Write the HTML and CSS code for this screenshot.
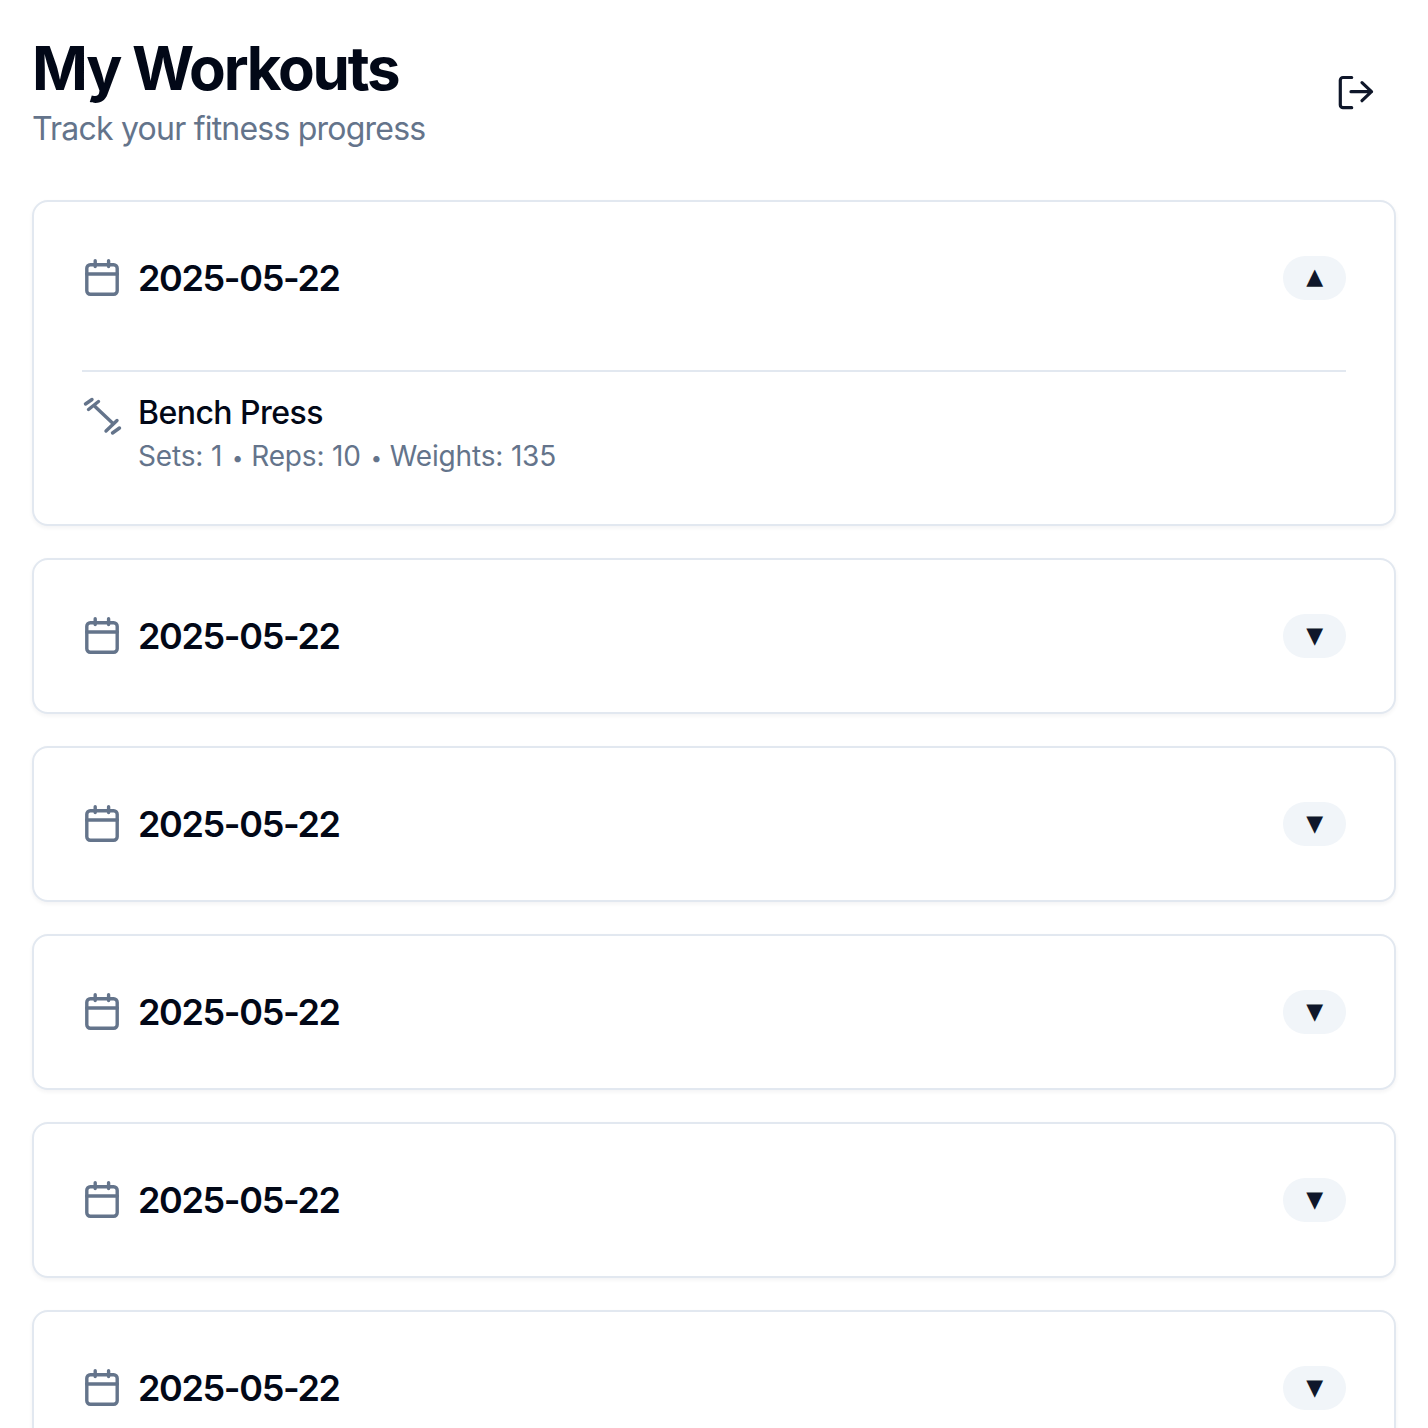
FILE: index.html
```html
<!DOCTYPE html>
<html lang="en">
<head>
<meta charset="utf-8">
<title>My Workouts</title>
<link rel="stylesheet" href="styles.css">
</head>
<body>
<svg class="sprites" width="0" height="0" aria-hidden="true">
  <symbol id="cal" viewBox="0 0 40 40">
    <rect x="4.8" y="6.8" width="30.4" height="29.4" rx="3.5"/>
    <path d="M4.8 16H35.2M13.2 2.8V8.5M26.6 2.8V8.5"/>
  </symbol>
</svg>
<main class="page">
  <header class="top">
    <div>
      <h1 class="title">My Workouts</h1>
      <p class="subtitle">Track your fitness progress</p>
    </div>
    <button class="logout" aria-label="Log out">
      <svg class="logout-icon" viewBox="0 0 48 48"><path d="M19.7 9.5H11A2.7 2.7 0 0 0 8.3 12.2V37A2.7 2.7 0 0 0 11 39.7H19.7M19 23.7H39.5M30 14.7L39.5 23.7L30 32.7"/></svg>
    </button>
  </header>
  <section class="list">
    <article class="card">
      <div class="row">
        <div class="date-wrap"><svg class="icon"><use href="#cal"/></svg><h2 class="date">2025-05-22</h2></div>
        <button class="toggle"><span class="glyph glyph-up">▲</span></button>
      </div>
      <div class="body">
        <div class="exercise">
          <svg class="icon dumbbell" viewBox="0 0 40 40"><path d="M3.5 8L10 3.5M6.5 13.5L16.5 5.5M13 10.5L31 27.5M24 35L35 24.5M30.5 37L37.5 32"/></svg>
          <div>
            <div class="ex-name">Bench Press</div>
            <div class="ex-meta">Sets: 1<span class="dot">•</span>Reps: 10<span class="dot">•</span>Weights: 135</div>
          </div>
        </div>
      </div>
    </article>
    <article class="card"><div class="row"><div class="date-wrap"><svg class="icon"><use href="#cal"/></svg><h2 class="date">2025-05-22</h2></div><button class="toggle"><span class="glyph">▼</span></button></div></article>
    <article class="card"><div class="row"><div class="date-wrap"><svg class="icon"><use href="#cal"/></svg><h2 class="date">2025-05-22</h2></div><button class="toggle"><span class="glyph">▼</span></button></div></article>
    <article class="card"><div class="row"><div class="date-wrap"><svg class="icon"><use href="#cal"/></svg><h2 class="date">2025-05-22</h2></div><button class="toggle"><span class="glyph">▼</span></button></div></article>
    <article class="card"><div class="row"><div class="date-wrap"><svg class="icon"><use href="#cal"/></svg><h2 class="date">2025-05-22</h2></div><button class="toggle"><span class="glyph">▼</span></button></div></article>
    <article class="card"><div class="row"><div class="date-wrap"><svg class="icon"><use href="#cal"/></svg><h2 class="date">2025-05-22</h2></div><button class="toggle"><span class="glyph">▼</span></button></div></article>
  </section>
</main>
</body>
</html>
```
FILE: styles.css
```css
* { box-sizing: border-box; }
html, body { margin: 0; height: 1428px; overflow: hidden; background: #fff; }
body { font-family: Inter, "Noto Sans", sans-serif; color: #020817; }
.sprites { position: absolute; }
.page { padding: 32px; }
.top { display: flex; justify-content: space-between; align-items: center; margin-bottom: 48px; }
.title { margin: 0; font-size: 60px; line-height: 72px; font-weight: 700; letter-spacing: -2.25px; }
.subtitle { margin: 0; padding-top: 1px; font-size: 32px; line-height: 47px; color: #64748b; letter-spacing: -0.78px; }
.logout { width: 80px; height: 80px; padding: 16px; border: 0; background: none; }
.logout-icon { display: block; width: 48px; height: 48px; fill: none; stroke: #0f172a; stroke-width: 3.2; stroke-linecap: round; stroke-linejoin: round; }
.list { display: flex; flex-direction: column; gap: 32px; }
.card { border: 2px solid #e2e8f0; border-radius: 16px; padding: 48px; background: #fff; box-shadow: 0 2px 4px rgba(15, 23, 42, .05); }
.row { display: flex; justify-content: space-between; align-items: center; height: 56px; }
.date-wrap { display: flex; align-items: center; gap: 16px; }
.icon { display: block; flex: none; width: 40px; height: 40px; fill: none; stroke: #64748b; stroke-width: 3.4; stroke-linecap: round; stroke-linejoin: round; }
.date { margin: 0; font-size: 36px; line-height: 56px; font-weight: 600; letter-spacing: -1.35px; }
.toggle { display: flex; align-items: center; justify-content: center; width: 63px; height: 44px; padding: 0; border: 0; border-radius: 22px; background: #f1f5f9; color: #0f172a; font: 400 20px/1 "DejaVu Sans", sans-serif; }
.glyph { display: block; margin-top: -2px; transform: scale(1.1, 1.12); }
.glyph-up { margin-top: -4px; }
.body { margin-top: 64px; border-top: 2px solid #e2e8f0; padding-top: 16px; }
.exercise { display: flex; gap: 16px; }
.dumbbell { margin-top: 8px; stroke-width: 3.4; }
.ex-name { padding-top: 1px; font-size: 32px; line-height: 47px; font-weight: 500; letter-spacing: -0.55px; }
.ex-meta { height: 40px; font-size: 28px; line-height: 40px; color: #64748b; letter-spacing: -0.17px; }
.dot { margin: 0 8px 0 10px; font-size: 20px; line-height: 0; vertical-align: 1px; }
```
